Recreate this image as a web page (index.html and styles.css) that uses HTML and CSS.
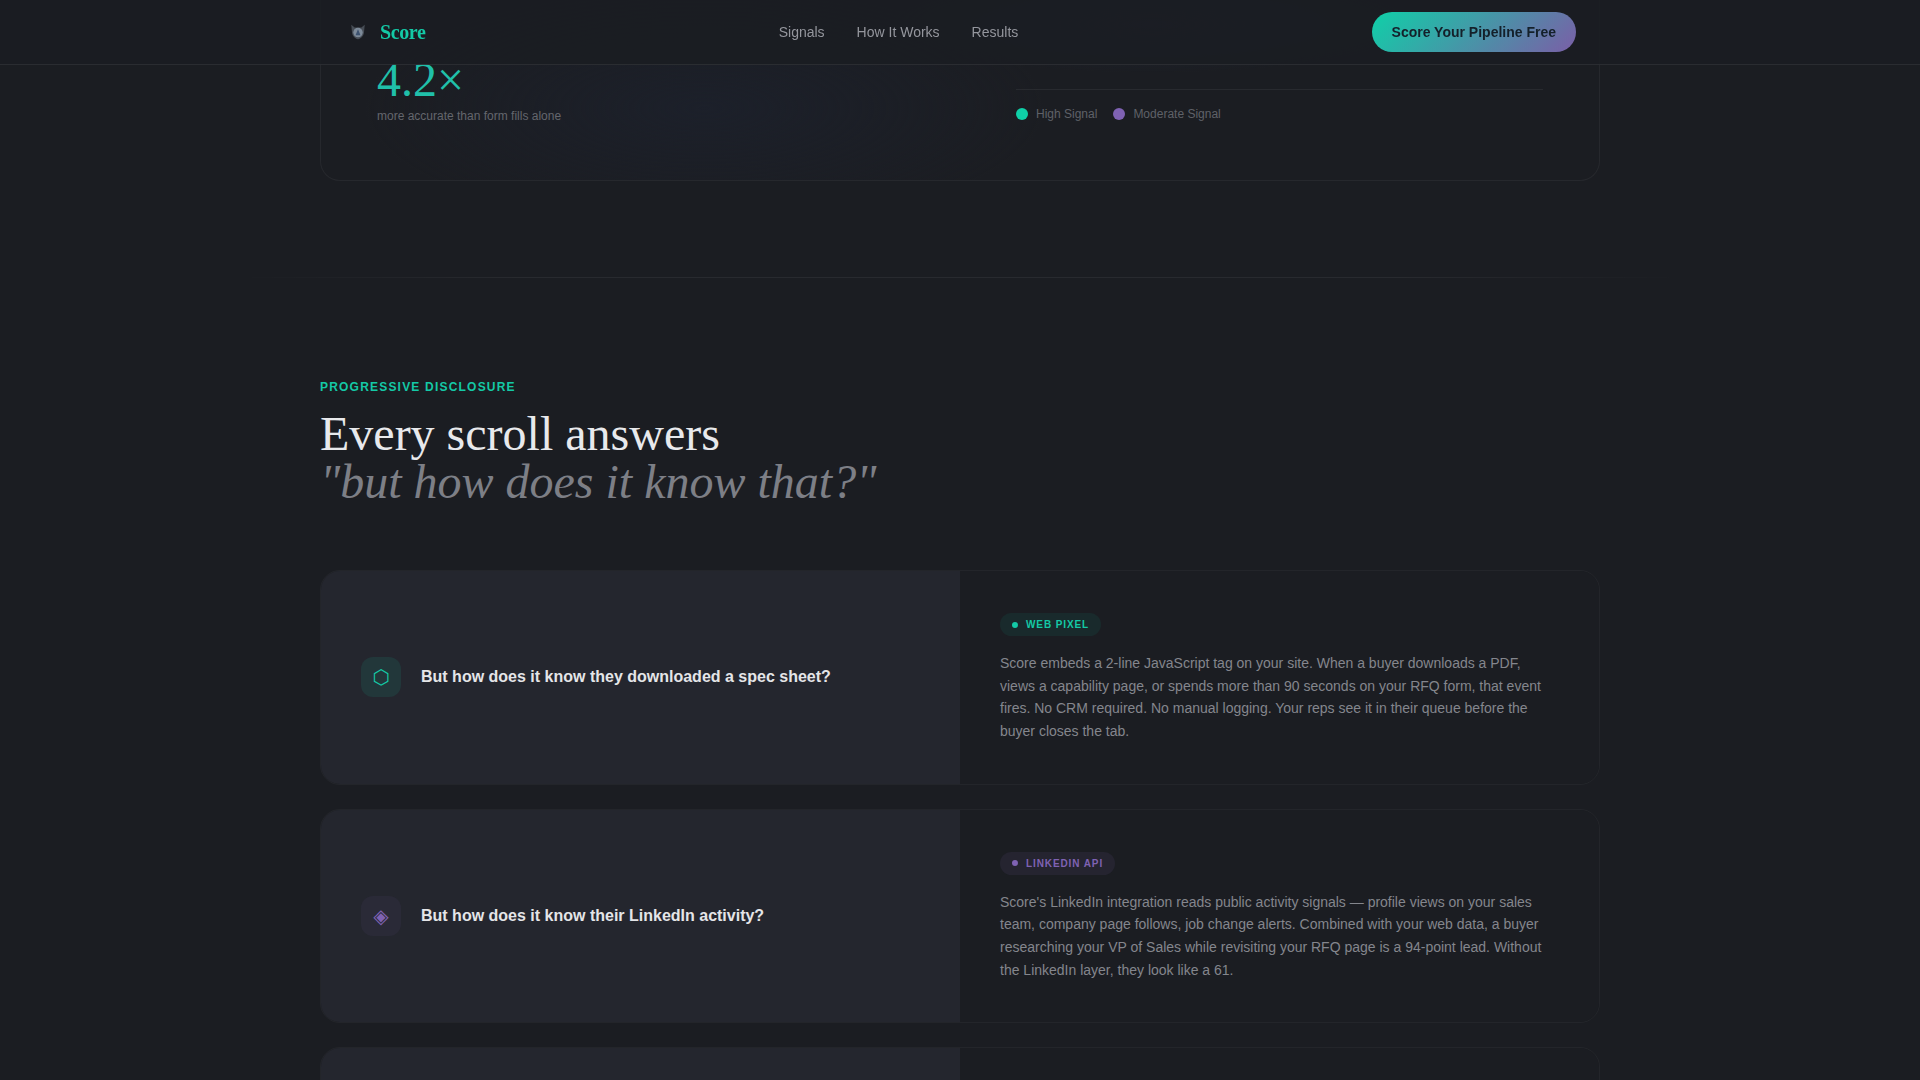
FILE: index.html
```html
<!DOCTYPE html>
<html lang="en">
<head>
<meta charset="utf-8">
<title>Score</title>
<link rel="stylesheet" href="styles.css">
</head>
<body>
<header class="nav">
  <div class="nav-inner">
    <a class="logo" href="#">
      <span class="logo-mark">
        <svg viewBox="0 0 16 16" width="18" height="18" aria-hidden="true">
          <path class="logo-horn" d="M2 1.500 5 4h6l3-2.500-.6 6c0 3.600-2.400 6.200-5.400 7-3-.8-5.400-3.400-5.400-7z"/>
          <circle class="logo-face" cx="8" cy="8.500" r="4.200"/>
          <path class="logo-core" d="M8 5.500 10.200 10.800H5.800z"/>
        </svg>
      </span>
      <span class="logo-text">Score</span>
    </a>
    <nav class="nav-links">
      <a href="#">Signals</a>
      <a href="#">How It Works</a>
      <a href="#">Results</a>
    </nav>
    <a class="cta" href="#">Score Your Pipeline Free</a>
  </div>
</header>

<main class="page">
  <section class="hero-card">
    <div class="stat">
      <div class="stat-value">4.2×</div>
      <div class="stat-label">more accurate than form fills alone</div>
    </div>
    <div class="chart">
      <div class="chart-area"></div>
      <div class="legend">
        <span class="legend-item"><i class="dot dot-teal"></i>High Signal</span>
        <span class="legend-item"><i class="dot dot-purple"></i>Moderate Signal</span>
      </div>
    </div>
  </section>

  <div class="divider"></div>

  <section class="disclosure">
    <div class="eyebrow">PROGRESSIVE DISCLOSURE</div>
    <h2 class="title">Every scroll answers<br><em>"but how does it know that?"</em></h2>

    <div class="qa-list">
      <article class="qa">
        <div class="qa-q">
          <span class="qa-icon icon-teal">⬡</span>
          <h3>But how does it know they downloaded a spec sheet?</h3>
        </div>
        <div class="qa-a">
          <span class="pill pill-teal"><i></i>WEB PIXEL</span>
          <p>Score embeds a 2-line JavaScript tag on your site. When a buyer downloads a PDF, views a capability page, or spends more than 90 seconds on your RFQ form, that event fires. No CRM required. No manual logging. Your reps see it in their queue before the buyer closes the tab.</p>
        </div>
      </article>
      <article class="qa">
        <div class="qa-q">
          <span class="qa-icon icon-purple">◈</span>
          <h3>But how does it know their LinkedIn activity?</h3>
        </div>
        <div class="qa-a">
          <span class="pill pill-purple"><i></i>LINKEDIN API</span>
          <p>Score's LinkedIn integration reads public activity signals — profile views on your sales team, company page follows, job change alerts. Combined with your web data, a buyer researching your VP of Sales while revisiting your RFQ page is a 94-point lead. Without the LinkedIn layer, they look like a 61.</p>
        </div>
      </article>
      <article class="qa qa-empty">
        <div class="qa-q"></div>
        <div class="qa-a"></div>
      </article>
    </div>
  </section>
</main>
</body>
</html>
```
FILE: styles.css
```css
* { box-sizing: border-box; }
html, body { margin: 0; height: 1080px; overflow: hidden; }
body {
  background: #1b1d22;
  color: #e4e5e8;
  font-family: "Liberation Sans", Arial, sans-serif;
}
a { color: inherit; text-decoration: none; }

.nav {
  position: fixed;
  top: 0; left: 0; right: 0;
  height: 65px;
  z-index: 10;
  background: rgba(27, 29, 34, 0.9);
  border-bottom: 1px solid rgba(255, 255, 255, 0.07);
}
.nav-inner {
  width: 1280px;
  height: 64px;
  margin: 0 auto;
  padding: 0 24px;
  display: flex;
  align-items: center;
  justify-content: space-between;
}
.logo { display: flex; align-items: center; gap: 8px; }
.logo-mark { width: 28px; height: 28px; display: flex; align-items: center; justify-content: center; }
.logo-horn { fill: #474d56; }
.logo-face { fill: #7d8a99; }
.logo-core { fill: #3d5270; }
.logo-text {
  font-family: "Liberation Serif", serif;
  font-weight: 700;
  font-size: 20px;
  letter-spacing: -0.4px;
  color: #14c9a6;
}
.nav-links { display: flex; gap: 32px; font-size: 14px; color: #94969d; }
.cta {
  height: 40px;
  padding: 0 20px;
  display: flex;
  align-items: center;
  border-radius: 20px;
  background: linear-gradient(135deg, #0fd0a8, #7b5ea7);
  color: #14202a;
  font-size: 14px;
  font-weight: 700;
}

.page { width: 1280px; margin: -120px auto 0; }
.hero-card {
  display: grid;
  grid-template-columns: 1fr 1fr;
  gap: 112px;
  height: 301px;
  padding: 0 56px 56px;
  align-items: end;
  border: 1px solid rgba(255, 255, 255, 0.05);
  border-radius: 20px;
  background:
    radial-gradient(ellipse 340px 120px at 30% 76%, #1c202a, transparent),
    radial-gradient(ellipse 260px 48px at 65% 48%, #1e2633, transparent),
    #1b1d22;
}
.stat { padding-bottom: 1px; }
.stat-value {
  font-family: "Liberation Serif", serif;
  font-size: 48px;
  line-height: 1;
  color: #20c0aa;
}
.stat-label { margin-top: 5px; font-size: 12px; color: #64666d; }
.chart { padding-bottom: 3px; }
.chart-area { height: 1px; background: rgba(255, 255, 255, 0.06); }
.legend { display: flex; gap: 16px; margin-top: 17px; font-size: 12px; color: #5f6168; }
.legend-item { display: flex; align-items: center; gap: 8px; }
.dot { width: 12px; height: 12px; border-radius: 50%; }
.dot-teal { background: #0fd0a8; }
.dot-purple { background: #7f62b3; }

.divider {
  height: 1px;
  width: 1440px;
  margin: 96px 0 0 -80px;
  background: linear-gradient(90deg, transparent, rgba(255, 255, 255, 0.06) 20%, rgba(255, 255, 255, 0.06) 80%, transparent);
}

.disclosure { padding-top: 102px; }
.eyebrow {
  font-size: 12px;
  font-weight: 700;
  letter-spacing: 1.2px;
  color: #14c9a6;
}
.title {
  margin: 16px 0 64px;
  font-family: "Liberation Serif", serif;
  font-weight: 400;
  font-size: 48px;
  line-height: 48px;
  color: #e8e9ec;
}
.title em { color: #7d7f86; }

.qa-list { display: flex; flex-direction: column; gap: 24px; }
.qa {
  display: grid;
  grid-template-columns: 1fr 1fr;
  border: 1px solid rgba(255, 255, 255, 0.04);
  border-radius: 20px;
  overflow: hidden;
}
.qa-empty { height: 214px; }
.qa-q {
  display: flex;
  align-items: center;
  gap: 20px;
  padding: 40px;
  background: #24262e;
}
.qa-q h3 { margin: 0; font-size: 16px; font-weight: 700; color: #e4e5e8; }
.qa-icon {
  flex: none;
  width: 40px;
  height: 40px;
  border-radius: 12px;
  display: flex;
  align-items: center;
  justify-content: center;
  font-family: "DejaVu Sans", sans-serif;
  font-size: 20px;
  line-height: 1;
}
.icon-teal { background: rgba(15, 208, 168, 0.1); color: #14c9a6; }
.icon-purple { background: rgba(127, 98, 179, 0.07); color: #7f62b3; }
.qa-a { padding: 42px 40px 41px; background: #1b1d22; }
.qa-a p { margin: 16px 0 0; font-size: 14px; line-height: 1.62; color: #84868d; }
.pill {
  display: inline-flex;
  align-items: center;
  gap: 8px;
  height: 23px;
  padding: 0 12px;
  border-radius: 12px;
  font-size: 10px;
  font-weight: 700;
  letter-spacing: 0.9px;
}
.pill i { width: 6px; height: 6px; border-radius: 50%; background: currentColor; }
.pill-teal { background: rgba(15, 208, 168, 0.08); color: #14c9a6; }
.pill-purple { background: rgba(127, 98, 179, 0.1); color: #7f62b3; }
```
